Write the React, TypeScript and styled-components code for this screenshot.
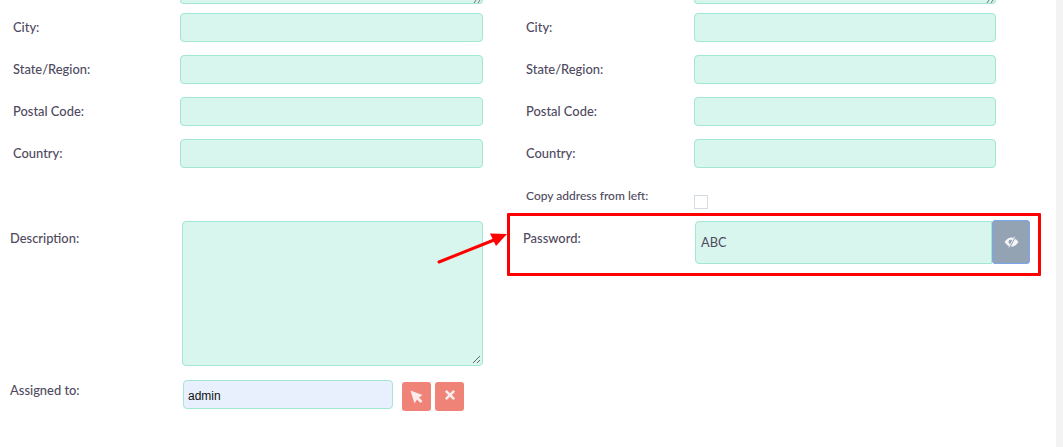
import styled, { createGlobalStyle } from 'styled-components';
import { FaTimes } from 'react-icons/fa';

const GlobalStyle = createGlobalStyle`
	html, body {
		margin: 0;
		padding: 0;
		background: #ffffff;
	}
	* {
		box-sizing: border-box;
	}
`;

const Page = styled.div`
	position: relative;
	width: 1063px;
	height: 447px;
	overflow: hidden;
	font-family: Lato, "Open Sans", sans-serif;
	color: #4f4a60;
`;

const AddressColumns = styled.div`
	display: grid;
	grid-template-columns: 526px 1fr;
`;

const AddressColumn = styled.div<{ $inset: number }>`
	display: flex;
	flex-direction: column;
	padding-left: ${(props) => props.$inset}px;
`;

const TextareaStub = styled.div<{ $labelWidth: number; $width: number }>`
	position: relative;
	height: 4px;
	width: ${(props) => props.$width}px;
	margin-left: ${(props) => props.$labelWidth}px;
	margin-bottom: 9px;
	background: #d8f5ee;
	border: 1px solid #a1e7d3;
	border-top: 0;
	border-radius: 0 0 4px 4px;
`;

const StubGrip = styled.svg`
	position: absolute;
	right: 1px;
	bottom: 0;
	width: 8px;
	height: 3px;
`;

const Row = styled.div`
	display: flex;
	align-items: flex-start;
`;

const AddressRow = styled(Row)`
	margin-bottom: 13px;
`;

const Label = styled.label<{ $width: number }>`
	width: ${(props) => props.$width}px;
	flex: none;
	font-size: 12.9px;
	font-weight: 500;
	line-height: 29px;
`;

const TextBox = styled.div<{ $width: number }>`
	width: ${(props) => props.$width}px;
	height: 29px;
	background: #d8f5ee;
	border: 1px solid #a1e7d3;
	border-radius: 4px;
`;

const CopyRow = styled.div`
	display: flex;
	align-items: flex-start;
	height: 40px;
`;

const CopyLabel = styled.label`
	width: 168px;
	flex: none;
	font-size: 12px;
	font-weight: 500;
	line-height: 18px;
	margin-top: 6px;
`;

const CheckBox = styled.span`
	width: 14px;
	height: 14px;
	margin-top: 14px;
	background: #ffffff;
	border: 1px solid #d5dce4;
`;

const MainColumns = styled.div`
	display: grid;
	grid-template-columns: 523px 1fr;
`;

const MainColumn = styled.div`
	padding-left: 10px;
	display: flex;
	flex-direction: column;
`;

const MainColumnRight = styled.div`
	display: flex;
	align-items: flex-start;
`;

const MainLabel = styled.label<{ $width: number; $top: number }>`
	width: ${(props) => props.$width}px;
	flex: none;
	font-size: 12.9px;
	font-weight: 500;
	line-height: 18px;
	padding-top: ${(props) => props.$top}px;
`;

const Description = styled.div`
	position: relative;
	width: 301px;
	height: 145px;
	background: #d8f5ee;
	border: 1px solid #a1e7d3;
	border-radius: 4px;
`;

const ResizeGrip = styled.svg`
	position: absolute;
	right: 1px;
	bottom: 1px;
	width: 10px;
	height: 10px;
`;

const AssignedRow = styled.div`
	display: flex;
	align-items: flex-start;
	margin-top: 14px;
`;

const AssignedInput = styled.div`
	width: 210px;
	height: 29px;
	background: #e8f0fe;
	border: 1px solid #a1e7d3;
	border-radius: 4px;
	padding-left: 4px;
	font-family: "Liberation Sans", Arial, sans-serif;
	font-size: 12px;
	line-height: 30px;
	color: #111111;
`;

const ActionButtons = styled.div`
	display: flex;
	gap: 4px;
	margin: 2px 0 0 9px;
`;

const ActionButton = styled.button<{ $alignTop?: boolean }>`
	width: 29px;
	height: 29px;
	padding: 0;
	background: #f08377;
	border: 0;
	border-radius: 3px;
	color: #f8ecec;
	display: flex;
	justify-content: center;
	align-items: ${(props) => (props.$alignTop ? 'flex-start' : 'center')};
	padding-top: ${(props) => (props.$alignTop ? '6px' : '0')};
`;

const PasswordField = styled.div`
	display: flex;
	align-items: flex-start;
	height: 44px;
	margin-top: -1px;
`;

const PasswordInput = styled.div`
	width: 297px;
	height: 43px;
	margin-top: 1px;
	background: #d8f5ee;
	border: 1px solid #a1e7d3;
	border-radius: 4px 0 0 4px;
	padding-left: 5px;
	font-size: 12.8px;
	font-weight: 400;
	line-height: 41px;
`;

const EyeButton = styled.button`
	width: 38px;
	height: 44px;
	padding: 0;
	background: #94a3b4;
	border: 1px solid #7ba6ee;
	border-radius: 3px;
	color: #f4f6f8;
	display: flex;
	justify-content: center;
	align-items: center;
`;

const Highlight = styled.div`
	position: absolute;
	left: 507px;
	top: 213px;
	width: 534px;
	height: 63px;
	border: 3px solid #ff0000;
	border-radius: 1px;
	pointer-events: none;
`;

const Arrow = styled.svg`
	position: absolute;
	left: 430px;
	top: 222px;
	width: 82px;
	height: 50px;
	pointer-events: none;
`;

const ScrollTrack = styled.div`
	position: absolute;
	top: 0;
	right: 0;
	bottom: 0;
	width: 7px;
	background: #f3f3f3;
`;

const cityFields = ['City:', 'State/Region:', 'Postal Code:', 'Country:'];

const App = () => {
	return (
		<Page>
			<GlobalStyle />
			<AddressColumns>
				<AddressColumn $inset={13}>
					<TextareaStub $labelWidth={167} $width={303}>
						<StubGrip viewBox="0 0 8 3">
							<path d="M1 3 L3 0 M5 3 L7 0" stroke="#555" strokeWidth="0.8" />
						</StubGrip>
					</TextareaStub>
					{cityFields.map((field) => (
						<AddressRow key={field}>
							<Label $width={167}>{field}</Label>
							<TextBox $width={303} />
						</AddressRow>
					))}
				</AddressColumn>
				<AddressColumn $inset={0}>
					<TextareaStub $labelWidth={168} $width={302}>
						<StubGrip viewBox="0 0 8 3">
							<path d="M1 3 L3 0 M5 3 L7 0" stroke="#555" strokeWidth="0.8" />
						</StubGrip>
					</TextareaStub>
					{cityFields.map((field) => (
						<AddressRow key={field}>
							<Label $width={168}>{field}</Label>
							<TextBox $width={302} />
						</AddressRow>
					))}
					<CopyRow>
						<CopyLabel>Copy address from left:</CopyLabel>
						<CheckBox />
					</CopyRow>
				</AddressColumn>
			</AddressColumns>
			<MainColumns>
				<MainColumn>
					<Row>
						<MainLabel $width={172} $top={8}>Description:</MainLabel>
						<Description>
							<ResizeGrip viewBox="0 0 10 10">
								<path d="M2 9 L9 2 M6 9 L9 6" stroke="#555" strokeWidth="0.9" />
							</ResizeGrip>
						</Description>
					</Row>
					<AssignedRow>
						<MainLabel $width={173} $top={1}>Assigned to:</MainLabel>
						<AssignedInput>admin</AssignedInput>
						<ActionButtons>
							<ActionButton>
								<svg width="13" height="14" viewBox="0 0 13 14">
									<path d="M0.5 0.5 L12.5 5 L9 7.5 L12.5 11 L10.5 13 L7 9.5 L4.5 13.5 Z" fill="currentColor" />
								</svg>
							</ActionButton>
							<ActionButton $alignTop>
								<FaTimes size={14} />
							</ActionButton>
						</ActionButtons>
					</AssignedRow>
				</MainColumn>
				<MainColumnRight>
					<MainLabel $width={172} $top={8}>Password:</MainLabel>
					<PasswordField>
						<PasswordInput>ABC</PasswordInput>
						<EyeButton>
							<svg width="15" height="12" viewBox="0 0 14 11">
								<path d="M0.5 5.5 C2.5 2.5 4.8 1.2 7 1.2 C9.2 1.2 11.5 2.5 13.5 5.5 C11.5 8.5 9.2 9.8 7 9.8 C4.8 9.8 2.5 8.5 0.5 5.5 Z" fill="currentColor" />
								<circle cx="6.2" cy="5.5" r="2" fill="#94a3b4" />
								<path d="M10.5 0.5 L5 10.5" stroke="#94a3b4" strokeWidth="1.6" />
								<path d="M10 0.5 L4.5 10.5" stroke="currentColor" strokeWidth="0.9" />
							</svg>
						</EyeButton>
					</PasswordField>
				</MainColumnRight>
			</MainColumns>
			<Highlight />
			<Arrow viewBox="0 0 82 50">
				<path d="M9 40 L64 18" stroke="#ff0000" strokeWidth="3" strokeLinecap="round" />
				<path d="M77 12 L60 11.5 L66 24 Z" fill="#ff0000" />
			</Arrow>
			<ScrollTrack />
		</Page>
	);
};

export default App;
